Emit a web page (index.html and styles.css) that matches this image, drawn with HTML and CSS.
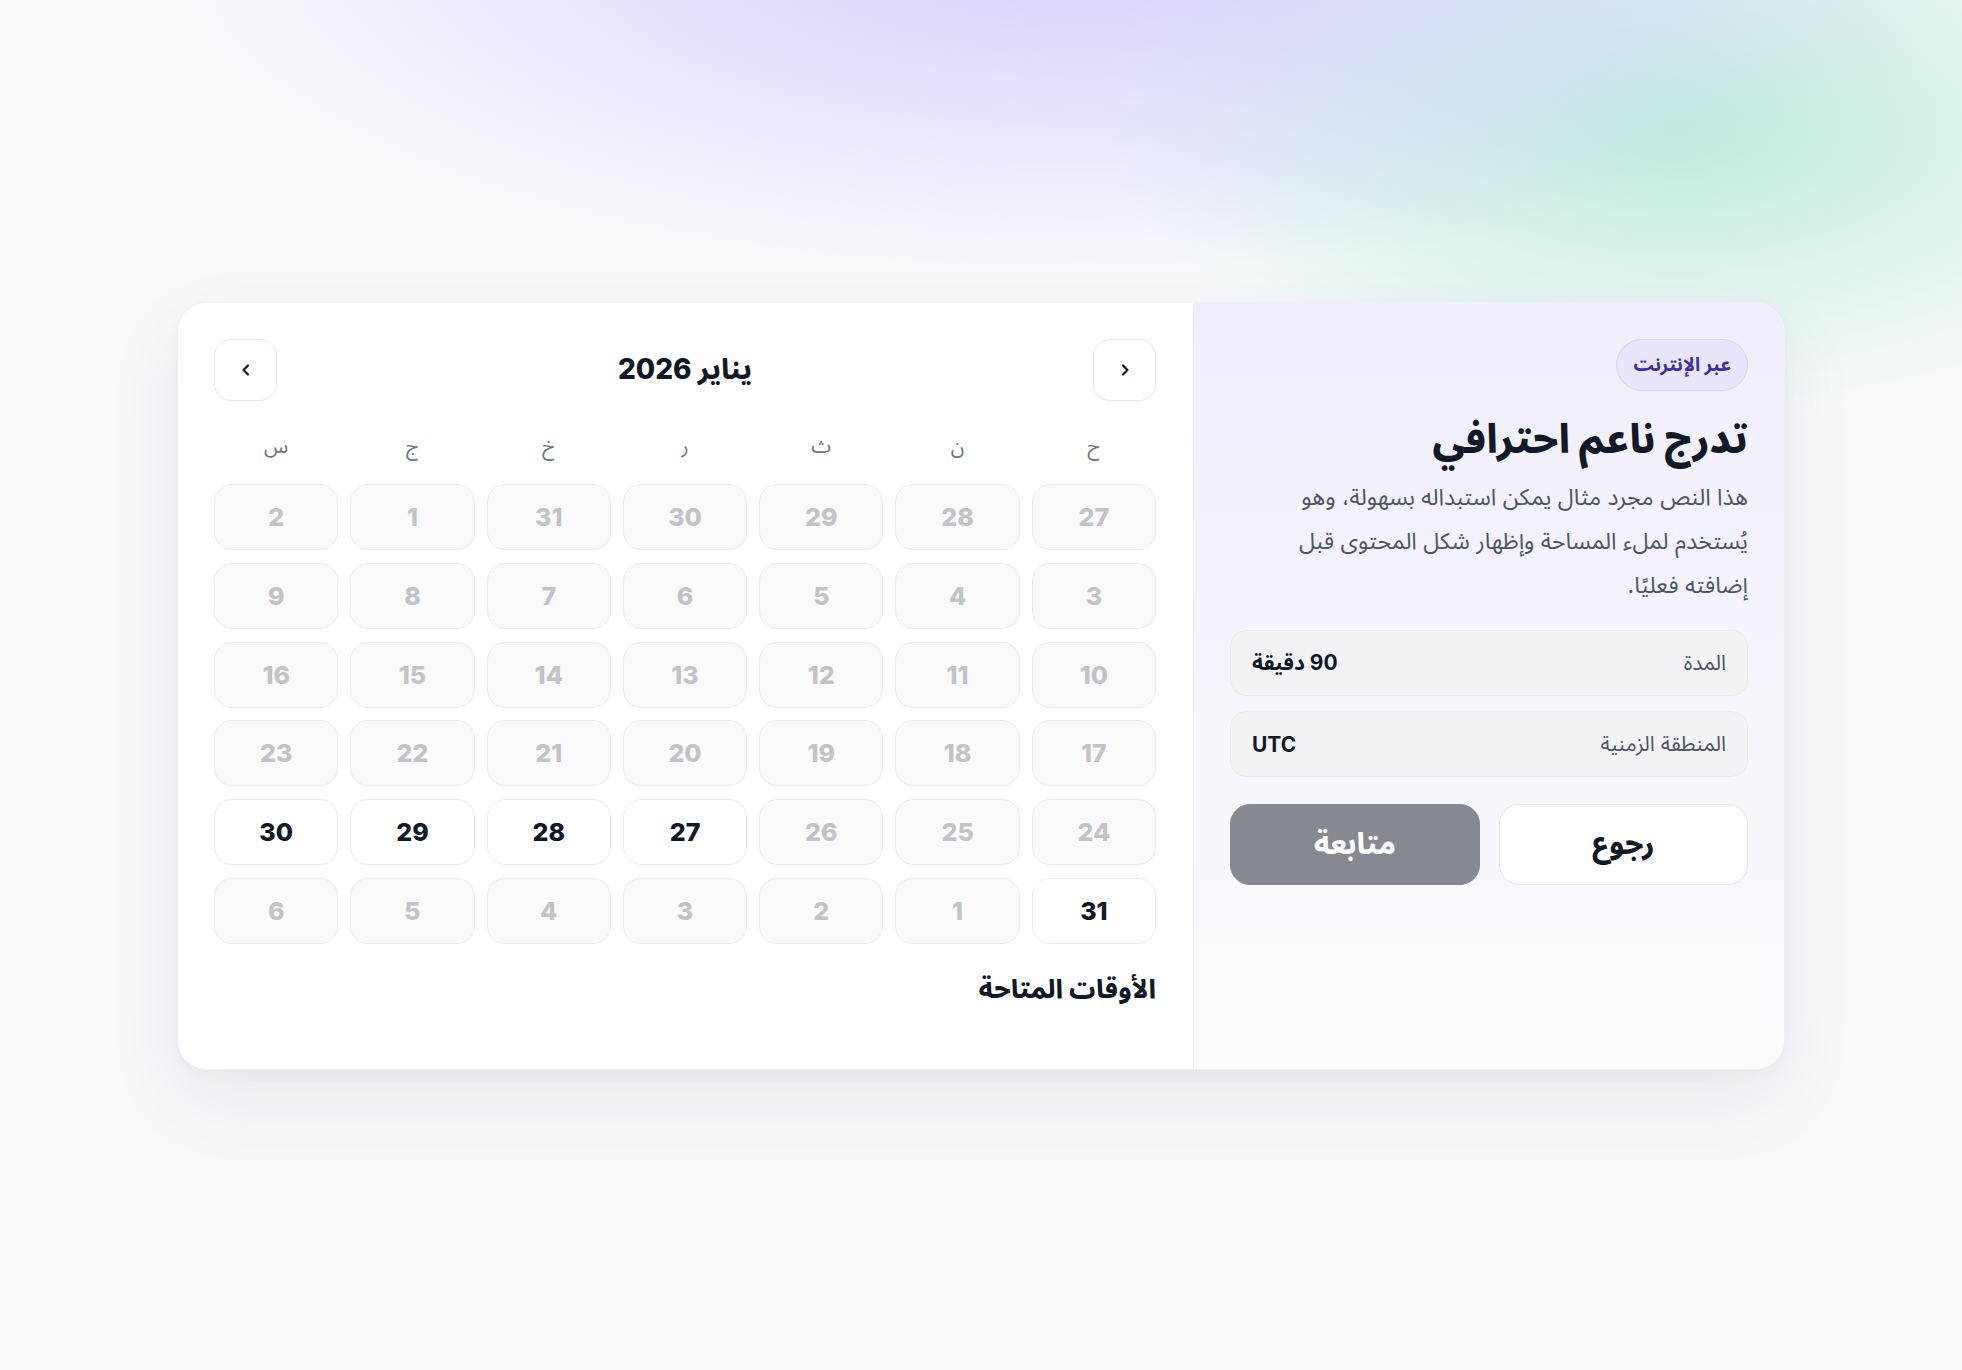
FILE: index.html
```html
<!DOCTYPE html>
<html lang="ar" dir="rtl">
<head>
<meta charset="utf-8">
<title>حجز موعد</title>
<link rel="stylesheet" href="styles.css">
</head>
<body>
<main class="page">
  <section class="card">
    <aside class="info">
      <span class="badge">عبر الإنترنت</span>
      <h1 class="title">تدرج ناعم احترافي</h1>
      <p class="desc">هذا النص مجرد مثال يمكن استبداله بسهولة، وهو يُستخدم لملء المساحة وإظهار شكل المحتوى قبل إضافته فعليًا.</p>
      <div class="field"><span class="field-label">المدة</span><span class="field-value">90 دقيقة</span></div>
      <div class="field"><span class="field-label">المنطقة الزمنية</span><span class="field-value">UTC</span></div>
      <div class="actions">
        <button class="btn btn-back">رجوع</button>
        <button class="btn btn-next">متابعة</button>
      </div>
    </aside>
    <div class="calendar">
      <div class="cal-head">
        <button class="nav-btn" aria-label="السابق">
          <svg viewBox="0 0 16 16" width="16" height="16"><path d="M6 3.5 L10.5 8 L6 12.5" fill="none" stroke="#111827" stroke-width="2.2" stroke-linecap="round" stroke-linejoin="round"/></svg>
        </button>
        <h2 class="month">يناير 2026</h2>
        <button class="nav-btn" aria-label="التالي">
          <svg viewBox="0 0 16 16" width="16" height="16"><path d="M10 3.5 L5.5 8 L10 12.5" fill="none" stroke="#111827" stroke-width="2.2" stroke-linecap="round" stroke-linejoin="round"/></svg>
        </button>
      </div>
      <div class="weekdays">
        <span>ح</span><span>ن</span><span>ث</span><span>ر</span><span>خ</span><span>ج</span><span>س</span>
      </div>
      <div class="days">
        <span class="day off">27</span><span class="day off">28</span><span class="day off">29</span><span class="day off">30</span><span class="day off">31</span><span class="day off">1</span><span class="day off">2</span>
        <span class="day off">3</span><span class="day off">4</span><span class="day off">5</span><span class="day off">6</span><span class="day off">7</span><span class="day off">8</span><span class="day off">9</span>
        <span class="day off">10</span><span class="day off">11</span><span class="day off">12</span><span class="day off">13</span><span class="day off">14</span><span class="day off">15</span><span class="day off">16</span>
        <span class="day off">17</span><span class="day off">18</span><span class="day off">19</span><span class="day off">20</span><span class="day off">21</span><span class="day off">22</span><span class="day off">23</span>
        <span class="day off">24</span><span class="day off">25</span><span class="day off">26</span><span class="day">27</span><span class="day">28</span><span class="day">29</span><span class="day">30</span>
        <span class="day">31</span><span class="day off">1</span><span class="day off">2</span><span class="day off">3</span><span class="day off">4</span><span class="day off">5</span><span class="day off">6</span>
      </div>
      <h3 class="slots-title">الأوقات المتاحة</h3>
      <div class="slots"></div>
    </div>
  </section>
</main>
</body>
</html>
```

FILE: styles.css
```css
* { box-sizing: border-box; }

html, body {
  margin: 0;
  padding: 0;
}

body {
  width: 1962px;
  min-height: 1370px;
  font-family: "Inter", "Noto Sans Arabic", "Noto Sans", "DejaVu Sans", sans-serif;
  color: #111827;
  background:
    radial-gradient(1250px 460px at 1080px -60px, rgba(205, 199, 251, 0.85), rgba(205, 199, 251, 0) 72%),
    radial-gradient(820px 400px at 1680px 130px, rgba(176, 232, 212, 0.8), rgba(176, 232, 212, 0) 70%),
    #f8f9fb;
  background-repeat: no-repeat;
  background-color: #f8f9fb;
}

.page {
  padding-top: 302px;
  display: flex;
  justify-content: center;
}

.card {
  width: 1608px;
  display: flex;
  background: #ffffff;
  border: 1px solid #eef0f3;
  border-radius: 30px;
  overflow: hidden;
  box-shadow: 0 30px 80px rgba(17, 24, 39, 0.07), 0 4px 14px rgba(17, 24, 39, 0.03);
}

/* info panel (right side) */
.info {
  width: 591px;
  flex: none;
  padding: 36px;
  display: flex;
  flex-direction: column;
  align-items: flex-start;
  background: linear-gradient(180deg, #f0eefc 0%, #f5f4fc 45%, #fbfbfc 100%);
  border-left: 1px solid #eceef2;
}

.badge {
  display: inline-flex;
  align-items: center;
  height: 52px;
  padding: 0 16px;
  border-radius: 26px;
  background: #e9e6fb;
  border: 1px solid #d7d2f6;
  color: #3730a3;
  font-size: 19px;
  font-weight: 700;
}

.title {
  margin: 20px 0 0;
  font-size: 40px;
  line-height: 56px;
  font-weight: 800;
  color: #111827;
}

.desc {
  margin: 8px 0 0;
  max-width: 485px;
  font-size: 23px;
  line-height: 44px;
  color: #4b5563;
}

.field {
  width: 100%;
  height: 66px;
  margin-top: 23px;
  padding: 0 21px;
  display: flex;
  align-items: center;
  justify-content: space-between;
  background: #f3f3f6;
  border: 1px solid #e9eaee;
  border-radius: 16px;
}

.field + .field { margin-top: 15px; }

.field-label {
  font-size: 21px;
  color: #4b5563;
}

.field-value {
  font-size: 21px;
  font-weight: 700;
  color: #111827;
}

.actions {
  width: 100%;
  margin-top: 27px;
  display: flex;
  gap: 19px;
}

.btn {
  flex: 1;
  height: 81px;
  border-radius: 20px;
  font-family: inherit;
  font-size: 29px;
  font-weight: 800;
}

.btn-back {
  background: #ffffff;
  border: 1px solid #e3e5e9;
  color: #111827;
}

.btn-next {
  background: #868892;
  border: 1px solid #868892;
  color: #ffffff;
}

/* calendar panel (left side) */
.calendar {
  flex: 1;
  padding: 36px 37px 36px 36px;
  background: #ffffff;
}

.cal-head {
  display: flex;
  align-items: center;
  justify-content: space-between;
  height: 62px;
}

.nav-btn {
  width: 63px;
  height: 62px;
  display: flex;
  align-items: center;
  justify-content: center;
  background: #ffffff;
  border: 1px solid #e6e7ea;
  border-radius: 17px;
  padding: 0;
}

.month {
  margin: 0;
  font-size: 28px;
  font-weight: 800;
  color: #111827;
}

.weekdays {
  margin-top: 24px;
  height: 44px;
  display: grid;
  grid-template-columns: repeat(7, 1fr);
  column-gap: 12px;
  align-items: center;
  text-align: center;
  font-size: 20px;
  color: #6b7280;
}

.days {
  margin-top: 15px;
  display: grid;
  grid-template-columns: repeat(7, 1fr);
  grid-auto-rows: 66px;
  column-gap: 12px;
  row-gap: 12.8px;
}

.day {
  display: flex;
  align-items: center;
  justify-content: center;
  background: #ffffff;
  border: 1px solid #ebebee;
  border-radius: 18px;
  font-size: 25px;
  font-weight: 800;
  color: #111827;
}

.day.off {
  background: #fafafa;
  color: #c3c3c7;
}

.slots-title {
  margin: 27px 0 0;
  font-size: 26px;
  line-height: 36px;
  font-weight: 800;
  color: #111827;
}

.slots {
  min-height: 26px;
}
```
